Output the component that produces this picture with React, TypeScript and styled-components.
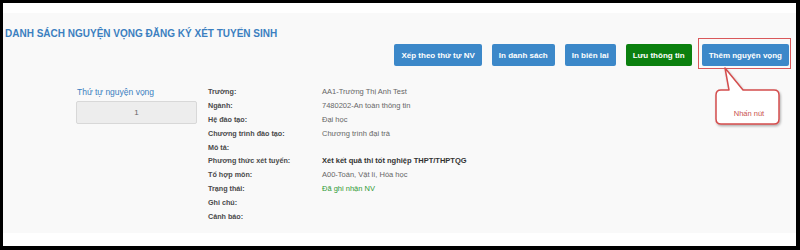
import styled, { createGlobalStyle } from 'styled-components';

const GlobalStyle = createGlobalStyle`
  html, body {
    margin: 0;
    padding: 0;
    background: #000;
  }
  body {
    font-family: 'Liberation Sans', Arial, sans-serif;
  }
`;

const Frame = styled.div`
  margin: 3px 4px 0 3px;
  height: 243px;
  background: #fff;
  padding-top: 10px;
  box-sizing: border-box;
  position: relative;
`;

const Panel = styled.div`
  background: #f9f9f9;
  height: 220px;
  padding: 14px 7px 0 2px;
  box-sizing: border-box;
`;

const Title = styled.h2`
  margin: 0;
  font-size: 10px;
  line-height: 14px;
  font-weight: bold;
  color: #3b7fc0;
`;

const Toolbar = styled.div`
  display: flex;
  justify-content: flex-end;
  gap: 10px;
  margin-top: 3px;
`;

const Button = styled.button<{ $tone?: 'blue' | 'green'; $marked?: boolean }>`
  position: relative;
  height: 22px;
  padding: 0 7px;
  border: none;
  border-radius: 2px;
  font-family: inherit;
  font-size: 8px;
  font-weight: bold;
  color: #fff;
  background: ${p => (p.$tone === 'green' ? '#0b800f' : '#3c88c9')};

  &::after {
    content: '';
    display: ${p => (p.$marked ? 'block' : 'none')};
    position: absolute;
    top: -6px;
    left: -4px;
    right: -2px;
    bottom: -3px;
    border: 1.5px solid #d9585a;
  }
`;

const Content = styled.div`
  display: flex;
  margin-top: 19px;
  padding-left: 71px;
`;

const OrderColumn = styled.div`
  width: 121px;
  margin-right: 11px;
`;

const OrderLabel = styled.div`
  font-size: 8.5px;
  line-height: 14px;
  color: #3b7fc0;
  padding-left: 1px;
`;

const OrderBox = styled.div`
  margin-top: 2px;
  height: 23px;
  box-sizing: border-box;
  border: 1px solid #d8d8d8;
  border-radius: 2px;
  background: #ededed;
  display: flex;
  align-items: center;
  justify-content: center;
  font-size: 8px;
  color: #666;
`;

const DetailGrid = styled.div`
  display: grid;
  grid-template-columns: 114px auto;
  grid-auto-rows: 13.8px;
  align-items: center;
`;

const Label = styled.div`
  font-size: 7.2px;
  font-weight: bold;
  color: #4a4a4a;
`;

const Value = styled.div<{ $kind?: 'strong' | 'ok' }>`
  font-size: 7.5px;
  font-weight: ${p => (p.$kind === 'strong' ? 'bold' : 'normal')};
  color: ${p =>
    p.$kind === 'ok' ? '#2f9a35' : p.$kind === 'strong' ? '#333' : '#666'};
`;

const Callout = styled.div`
  position: absolute;
  left: 706px;
  top: 60px;
  width: 80px;
  height: 80px;
`;

const CalloutText = styled.span`
  position: absolute;
  left: 0;
  right: 0;
  top: 46px;
  text-align: center;
  font-size: 7.5px;
  color: #c9504c;
`;

const rows: { label: string; value?: string; kind?: 'strong' | 'ok' }[] = [
  { label: 'Trường:', value: 'AA1-Trường Thị Anh Test' },
  { label: 'Ngành:', value: '7480202-An toàn thông tin' },
  { label: 'Hệ đào tạo:', value: 'Đại học' },
  { label: 'Chương trình đào tạo:', value: 'Chương trình đại trà' },
  { label: 'Mô tả:' },
  {
    label: 'Phương thức xét tuyển:',
    value: 'Xét kết quả thi tốt nghiệp THPT/THPTQG',
    kind: 'strong',
  },
  { label: 'Tổ hợp môn:', value: 'A00-Toán, Vật lí, Hóa học' },
  { label: 'Trạng thái:', value: 'Đã ghi nhận NV', kind: 'ok' },
  { label: 'Ghi chú:' },
  { label: 'Cảnh báo:' },
];

export default function App() {
  return (
    <>
      <GlobalStyle />
      <Frame>
        <Panel>
          <Title>DANH SÁCH NGUYỆN VỌNG ĐĂNG KÝ XÉT TUYỂN SINH</Title>
          <Toolbar>
            <Button>Xếp theo thứ tự NV</Button>
            <Button>In danh sách</Button>
            <Button>In biên lai</Button>
            <Button $tone='green'>Lưu thông tin</Button>
            <Button $marked>Thêm nguyện vọng</Button>
          </Toolbar>
          <Content>
            <OrderColumn>
              <OrderLabel>Thứ tự nguyện vọng</OrderLabel>
              <OrderBox>1</OrderBox>
            </OrderColumn>
            <DetailGrid>
              {rows.flatMap(r => [
                <Label key={r.label}>{r.label}</Label>,
                <Value key={r.label + '-v'} $kind={r.kind}>
                  {r.value}
                </Value>,
              ])}
            </DetailGrid>
          </Content>
        </Panel>
        {/* annotation bubble pointing at the marked button */}
        <Callout>
          <svg width='80' height='80' viewBox='0 0 80 80'>
            <defs>
              <filter id='sh' x='-20%' y='-20%' width='140%' height='140%'>
                <feDropShadow dx='1' dy='1.5' stdDeviation='1' floodColor='#000' floodOpacity='0.3' />
              </filter>
            </defs>
            <path
              d='M12 27 H20 L16 5 L34 27 H65 Q70 27 70 32 V56 Q70 61 65 61 H12 Q7 61 7 56 V32 Q7 27 12 27 Z'
              fill='#fff'
              stroke='#d44e4e'
              strokeWidth='1.5'
              strokeLinejoin='round'
              filter='url(#sh)'
            />
          </svg>
          <CalloutText>Nhấn nút</CalloutText>
        </Callout>
      </Frame>
    </>
  );
}
